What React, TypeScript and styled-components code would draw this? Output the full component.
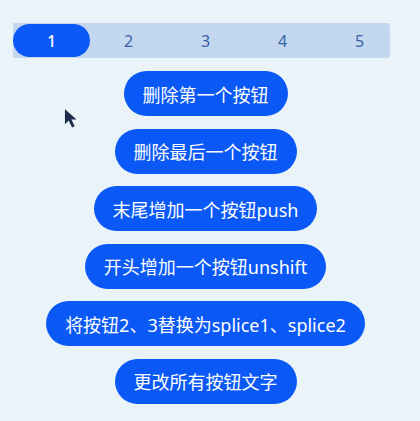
import styled, { createGlobalStyle } from "styled-components";

const tabs = ["1", "2", "3", "4", "5"];
const actions = [
  "删除第一个按钮",
  "删除最后一个按钮",
  "末尾增加一个按钮push",
  "开头增加一个按钮unshift",
  "将按钮2、3替换为splice1、splice2",
  "更改所有按钮文字",
];

const App: React.FC = () => {
  return (
    <Page>
      <GlobalStyle />
      <TabBar>
        {tabs.map((t, i) => (
          <Tab key={t} active={i === 0}>
            {t}
          </Tab>
        ))}
      </TabBar>
      <Actions>
        {actions.map((a) => (
          <ActionButton key={a}>{a}</ActionButton>
        ))}
      </Actions>
      <Cursor viewBox="0 0 16 22">
        <path d="M1 1 L1 17 L5 13.2 L8.6 20.5 L11.4 19.2 L7.9 12 L13.4 12 Z" fill="#1c2b4a" />
      </Cursor>
    </Page>
  );
};

const GlobalStyle = createGlobalStyle`
  html, body {
    margin: 0;
    background: #eaf3f7;
  }
`;

const Page = styled.div`
  position: relative;
  width: 411px;
  height: 421px;
  padding-top: 23px;
  box-sizing: border-box;
  font-family: "Noto Sans", "Noto Sans CJK SC", sans-serif;
`;

const TabBar = styled.div`
  display: flex;
  margin-left: 13px;
  width: 377px;
  height: 35px;
  padding: 1px 0;
  box-sizing: border-box;
  background: #c3d8ee;
  border-radius: 0 2px 2px 0;
  overflow: hidden;
`;

const Tab = styled.div<{ active?: boolean }>`
  flex: 0 0 77px;
  height: 33px;
  display: flex;
  align-items: center;
  justify-content: center;
  border-radius: 17px;
  font-size: 16px;
  background: ${({ active }) => (active ? "#0a59f7" : "transparent")};
  color: ${({ active }) => (active ? "#ffffff" : "#3b5fa6")};
  font-weight: ${({ active }) => (active ? 500 : 400)};
`;

const Actions = styled.div`
  display: flex;
  flex-direction: column;
  align-items: center;
  gap: 12.6px;
  margin-top: 13px;
`;

const ActionButton = styled.button`
  height: 45px;
  padding: 0 19px;
  border: none;
  border-radius: 23px;
  background: #0a59f7;
  color: #ffffff;
  font-family: "Noto Sans", "Noto Sans CJK SC", sans-serif;
  font-size: 18px;
  font-weight: 400;
  white-space: nowrap;
`;

const Cursor = styled.svg`
  position: absolute;
  left: 64px;
  top: 108px;
  width: 15px;
  height: 21px;
`;

export default App;
